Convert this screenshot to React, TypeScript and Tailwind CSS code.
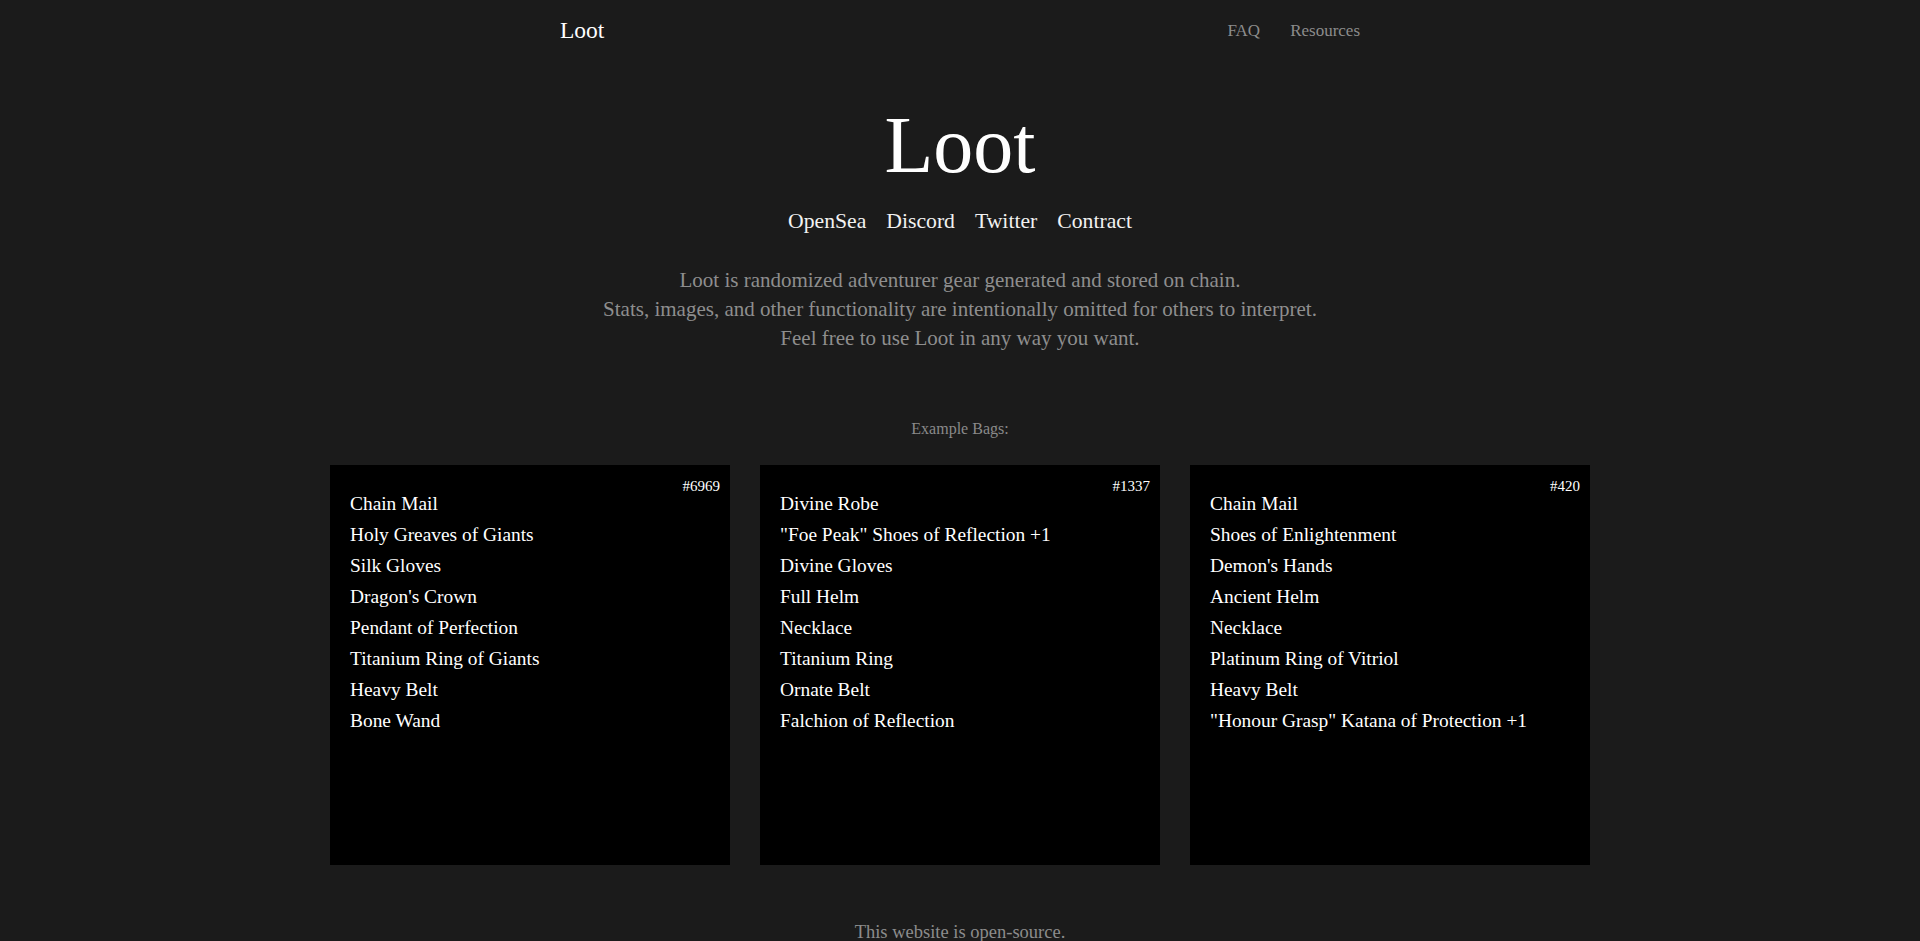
const bags = [
  {
    id: '#6969',
    items: [
      'Chain Mail',
      'Holy Greaves of Giants',
      'Silk Gloves',
      "Dragon's Crown",
      'Pendant of Perfection',
      'Titanium Ring of Giants',
      'Heavy Belt',
      'Bone Wand',
    ],
  },
  {
    id: '#1337',
    items: [
      'Divine Robe',
      '"Foe Peak" Shoes of Reflection +1',
      'Divine Gloves',
      'Full Helm',
      'Necklace',
      'Titanium Ring',
      'Ornate Belt',
      'Falchion of Reflection',
    ],
  },
  {
    id: '#420',
    items: [
      'Chain Mail',
      'Shoes of Enlightenment',
      "Demon's Hands",
      'Ancient Helm',
      'Necklace',
      'Platinum Ring of Vitriol',
      'Heavy Belt',
      '"Honour Grasp" Katana of Protection +1',
    ],
  },
];

const links = ['OpenSea', 'Discord', 'Twitter', 'Contract'];

export default function App() {
  return (
    <div className="min-h-screen bg-[#1b1b1b] text-white font-['Liberation_Serif',serif]">
      {/* Header */}
      <header className="max-w-[800px] mx-auto h-[62px] flex items-center justify-between">
        <a href="#" className="text-[23.5px] text-white">Loot</a>
        <nav className="flex gap-[30px] text-[17px] text-[#8c8c8c]">
          <a href="#">FAQ</a>
          <a href="#">Resources</a>
        </nav>
      </header>

      <main className="flex flex-col items-center">
        <h1 className="mt-[43px] text-[80px] leading-none">Loot</h1>

        <div className="mt-[26px] flex gap-[20px] text-[21.7px] leading-none text-[#f2f2f2]">
          {links.map((l) => (
            <a key={l} href="#">{l}</a>
          ))}
        </div>

        <p className="mt-[33px] text-center text-[21px] leading-[29px] text-[#8e8e8e]">
          Loot is randomized adventurer gear generated and stored on chain.
          <br />
          Stats, images, and other functionality are intentionally omitted for others to interpret.
          <br />
          Feel free to use Loot in any way you want.
        </p>

        <p className="mt-[68px] text-[16px] leading-none text-[#8a8a8a]">Example Bags:</p>

        <div className="mt-[28px] flex gap-[30px]">
          {bags.map((bag) => (
            <div key={bag.id} className="relative w-[400px] h-[400px] bg-black pt-[23px] pl-[20px]">
              <span className="absolute top-[14px] right-[10px] text-[15px] leading-none">{bag.id}</span>
              <ul>
                {bag.items.map((item, i) => (
                  <li key={i} className="text-[19.4px] leading-[31px]">{item}</li>
                ))}
              </ul>
            </div>
          ))}
        </div>

        <p className="mt-[58px] pb-10 text-[18.5px] leading-none text-[#8c8c8c]">This website is open-source.</p>
      </main>
    </div>
  );
}
